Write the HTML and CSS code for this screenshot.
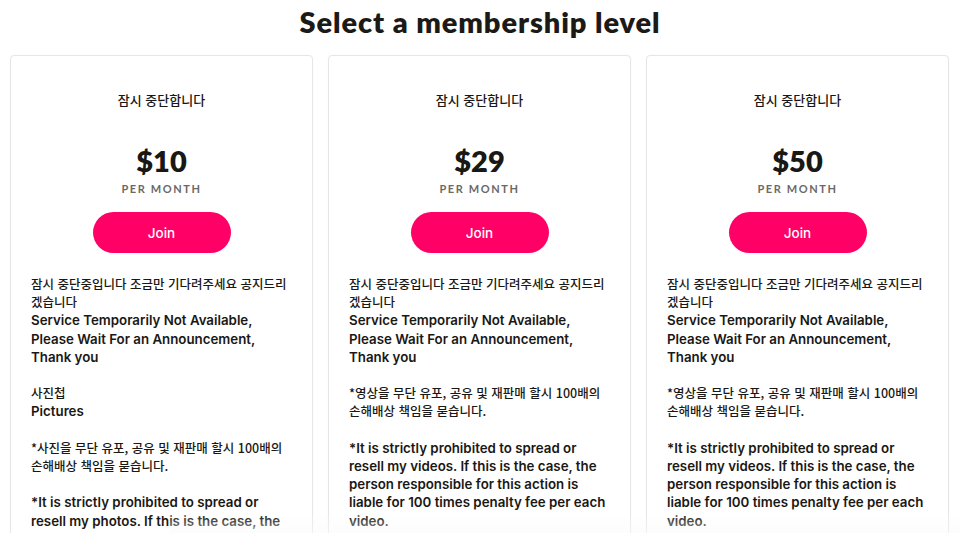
FILE: index.html
```html
<!DOCTYPE html>
<html lang="ko">
<head>
<meta charset="utf-8">
<title>Select a membership level</title>
<link rel="stylesheet" href="styles.css">
</head>
<body>
<main class="page">
  <h1 class="title">Select a membership level</h1>
  <div class="tiers">
    <section class="card">
      <div class="card-head">
        <p class="tier-name">잠시 중단합니다</p>
        <p class="price">$10</p>
        <p class="period">PER MONTH</p>
        <button class="join">Join</button>
      </div>
      <div class="desc">
        <p><span class="ko">잠시 중단중입니다 조금만 기다려주세요 공지드리겠습니다</span><br>Service Temporarily Not Available,<br>Please Wait For an Announcement,<br>Thank you</p>
        <p><span class="ko">사진첩</span><br>Pictures</p>
        <p><span class="ko">*사진을 무단 유포, 공유 및 재판매 할시 100배의 손해배상 책임을 묻습니다.</span></p>
        <p>*It is strictly prohibited to spread or resell my photos. If this is the case, the person responsible for this action is liable for 100 times penalty fee per each photo.</p>
      </div>
    </section>
    <section class="card">
      <div class="card-head">
        <p class="tier-name">잠시 중단합니다</p>
        <p class="price">$29</p>
        <p class="period">PER MONTH</p>
        <button class="join">Join</button>
      </div>
      <div class="desc">
        <p><span class="ko">잠시 중단중입니다 조금만 기다려주세요 공지드리겠습니다</span><br>Service Temporarily Not Available,<br>Please Wait For an Announcement,<br>Thank you</p>
        <p><span class="ko">*영상을 무단 유포, 공유 및 재판매 할시 100배의 손해배상 책임을 묻습니다.</span></p>
        <p>*It is strictly prohibited to spread or resell my videos. If this is the case, the person responsible for this action is liable for 100 times penalty fee per each video.</p>
      </div>
    </section>
    <section class="card">
      <div class="card-head">
        <p class="tier-name">잠시 중단합니다</p>
        <p class="price">$50</p>
        <p class="period">PER MONTH</p>
        <button class="join">Join</button>
      </div>
      <div class="desc">
        <p><span class="ko">잠시 중단중입니다 조금만 기다려주세요 공지드리겠습니다</span><br>Service Temporarily Not Available,<br>Please Wait For an Announcement,<br>Thank you</p>
        <p><span class="ko">*영상을 무단 유포, 공유 및 재판매 할시 100배의 손해배상 책임을 묻습니다.</span></p>
        <p>*It is strictly prohibited to spread or resell my videos. If this is the case, the person responsible for this action is liable for 100 times penalty fee per each video.</p>
      </div>
    </section>
  </div>
  <div class="fade"></div>
</main>
</body>
</html>
```

FILE: styles.css
```css
html, body {
  margin: 0;
  padding: 0;
  background: #ffffff;
  overflow: hidden;
}

body {
  font-family: "Inter", "Noto Sans CJK KR", sans-serif;
  color: #1a1814;
}

.page {
  position: relative;
  height: 533px;
  overflow: hidden;
}

.title {
  margin: 0;
  height: 42px;
  line-height: 42px;
  text-align: center;
  font-family: "Lato", sans-serif;
  font-size: 29px;
  font-weight: 800;
  letter-spacing: 0.9px;
  color: #1c1a16;
  padding-top: 1px;
}

.tiers {
  display: grid;
  grid-template-columns: repeat(3, 1fr);
  gap: 15px;
  padding: 0 11px 0 10px;
  margin-top: 12px;
}

.card {
  border: 1px solid #e6e6e6;
  border-radius: 4px;
  padding: 0 20px 40px 20px;
  box-shadow: 0 0 2px rgba(0, 0, 0, 0.03);
  background: #fff;
}

.card-head {
  display: flex;
  flex-direction: column;
  align-items: center;
  text-align: center;
}

.card-head p {
  margin: 0;
}

.tier-name {
  padding-top: 35px;
  font-family: "Noto Sans CJK KR", sans-serif;
  font-size: 13px;
  line-height: 18px;
  font-weight: 500;
  color: #1a1814;
}

.price {
  margin-top: 35px !important;
  font-family: "Lato", sans-serif;
  font-size: 29px;
  line-height: 34px;
  font-weight: 800;
  color: #1a1814;
}

.period {
  margin-top: 4px !important;
  font-family: "Lato", sans-serif;
  font-size: 11px;
  line-height: 14px;
  font-weight: 700;
  letter-spacing: 1.6px;
  color: #6b6965;
}

.join {
  margin-top: 16px;
  width: 138px;
  height: 41px;
  border: none;
  border-radius: 21px;
  background: #ff0066;
  color: #ffffff;
  font-family: "Inter", sans-serif;
  font-size: 13.5px;
  font-weight: 500;
  cursor: pointer;
}

.desc {
  margin-top: 22px;
  font-size: 13.3px;
  line-height: 18.2px;
  font-weight: 600;
  color: #1a1814;
}

.desc p {
  margin: 0 0 18.2px;
}

.ko {
  font-family: "Noto Sans CJK KR", sans-serif;
  font-size: 12.5px;
  font-weight: 500;
}

.fade {
  position: absolute;
  left: 170px;
  right: 0;
  bottom: 0;
  height: 20px;
  background: linear-gradient(to bottom, rgba(255, 255, 255, 0), rgba(250, 250, 250, 0.55));
  pointer-events: none;
}
```
